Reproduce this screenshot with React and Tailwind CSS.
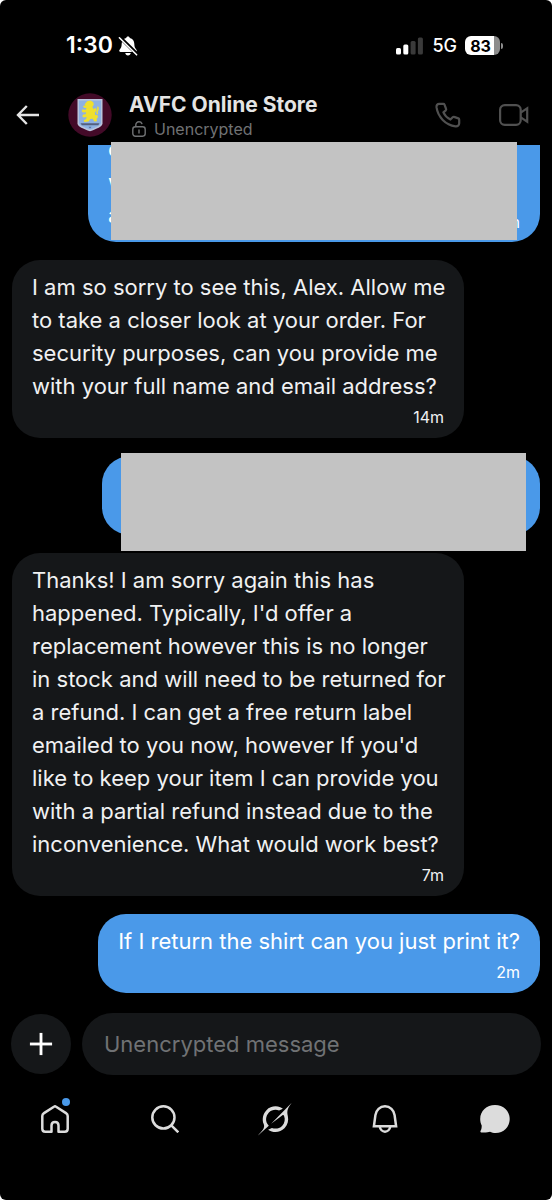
import { Plus } from "lucide-react";

function MutedBell() {
  return (
    <svg viewBox="0 0 20 20" className="size-5" aria-hidden="true">
      <path
        d="M10 .6c1 0 1.700.6 1.800 1.500 2.900.7 4.400 2.900 4.500 5.700.1 2.800.5 3.900 1.600 5.200.6.7.9 1.100.9 1.700 0 .8-.5 1.200-1.300 1.200H2.500c-.8 0-1.300-.4-1.300-1.200 0-.6.3-1 .9-1.700 1.100-1.300 1.500-2.400 1.600-5.200.1-2.800 1.600-5 4.500-5.700C8.300 1.200 9 .6 10 .6zM7.300 16.900h5.400c-.1 1.500-1.200 2.500-2.700 2.500s-2.600-1-2.700-2.500z"
        fill="#fff"
      />
      <path d="M1.600 1L19.400 18.400" stroke="#000" strokeWidth="3.600" />
      <path d="M1.400 1.800L18.600 18.800" stroke="#fff" strokeWidth="1.600" strokeLinecap="round" />
    </svg>
  );
}

function Signal() {
  return (
    <svg viewBox="0 0 28 18" className="h-[18px] w-7" aria-hidden="true">
      <rect x="0" y="11" width="5" height="6.500" rx="1.500" fill="#fff" />
      <rect x="7.300" y="7.500" width="5" height="10" rx="1.500" fill="#fff" />
      <rect x="14.600" y="4" width="5" height="13.500" rx="1.500" fill="#3a3a3a" />
      <rect x="21.900" y="0.500" width="5" height="17" rx="1.500" fill="#3a3a3a" />
    </svg>
  );
}

function Battery() {
  return (
    <div className="flex items-center gap-px">
      <div className="flex h-[19px] w-[35px] items-center justify-center overflow-hidden rounded-md bg-linear-to-r from-white from-83% to-[#8c8c8c] to-83% pr-1 text-[16px] leading-none font-bold text-black">
        83
      </div>
      <div className="h-1.5 w-0.5 rounded-r-full bg-[#8c8c8c]" />
    </div>
  );
}

function BackArrow() {
  return (
    <svg viewBox="0 0 24 20" className="h-5 w-6" fill="none" stroke="#e4e4e4" strokeWidth="2.400" aria-hidden="true">
      <path d="M10.800 1L2 10l8.800 9M2 10h21" />
    </svg>
  );
}

function Crest() {
  return (
    <svg viewBox="0 0 44 44" className="size-11 shrink-0" role="img" aria-label="AVFC crest">
      <circle cx="22" cy="22" r="21.700" fill="#430a28" />
      <path d="M9.500 6h25v24.500c0 3-6 5.500-12.500 7.800C15.500 36 9.500 33.500 9.500 30.500z" fill="#b9c4dc" />
      <path d="M11 7.500h22V30c0 2.300-5 4.300-11 6.500C16 34.300 11 32.300 11 30z" fill="#8db1e2" />
      <path
        d="M16.500 11.500l2.600-3.300 3.600-.6 2.600 1.600.5 2.600-1.500 2.100 1.500 2.300 1-.9 1.700.3-.3 2.500-1.400 1.300.4 2.500 2 .2 1 2-1.500 1.600.2 2.600-2.600.2-1.600-2.800-2.400.4-1.800 2.500-4 .3-.9-1.500 2.500-1.300.5-2-2.900.5-1.500-1.300.9-1.800 2.600-.3.400-2-3.100.4-1.400-1.300.7-1.700 3.300.1 1-1.700-2.700-.3-1-1.700 2.800-.7z"
        fill="#efdf2e"
      />
      <path d="M29.300 20.500c-1.600-2 1.800-3.400.6-6.300" fill="none" stroke="#efdf2e" strokeWidth="1.500" strokeLinecap="round" />
      <path d="M12.500 30.300l19-.1-1.200 2-16.400.1z" fill="#54607f" />
      <path d="M20.500 33.700h3l-1.500 1.800z" fill="#5b6b94" />
    </svg>
  );
}

function OpenLock() {
  return (
    <svg viewBox="0 0 14 16" className="h-4 w-3.5" fill="none" stroke="#707274" strokeWidth="1.400" strokeLinecap="round" aria-hidden="true">
      <rect x="0.800" y="5.800" width="12.400" height="9.400" rx="2.600" />
      <path d="M3.800 5.600V4c0-1.900 1.300-3.200 3.200-3.200 1.300 0 2.400.7 2.900 1.800M7 9v3" />
    </svg>
  );
}

function PhoneIcon() {
  return (
    <svg viewBox="0 0 26 26" className="size-[26px]" fill="none" stroke="#505050" strokeWidth="2.200" strokeLinejoin="round" aria-hidden="true">
      <path d="M4.200 1.800h4.200c.5 0 .9.300 1.100.8l1.600 4.400c.2.500 0 1-.3 1.300L8.400 10.400c1.300 3 3.800 5.700 7 7.200l2.300-2.400c.4-.4.900-.5 1.400-.3l4.200 1.500c.6.200.9.700.9 1.300v3.500c0 2.100-1.600 3.400-3.700 3.100C10.500 23 2.800 14.900 1.500 5.200c-.2-1.900.9-3.400 2.700-3.400z" />
    </svg>
  );
}

function VideoIcon() {
  return (
    <svg viewBox="0 0 30 22" className="h-[22px] w-[30px]" fill="none" stroke="#505050" strokeWidth="2.200" aria-hidden="true">
      <rect x="1.100" y="1.100" width="20.600" height="19.800" rx="4.600" />
      <path d="M21.700 8.600l6.500-4.300v13.400l-6.500-4.300" />
    </svg>
  );
}

function HomeIcon() {
  return (
    <svg viewBox="0 0 28 28" className="size-7" fill="none" stroke="#dcdcdc" strokeWidth="2.500" strokeLinejoin="round" aria-hidden="true">
      <path d="M12.900 1.700L3 8.100C1.900 8.800 1.300 9.800 1.300 11v12.700c0 1.800 1.200 3 3 3h6.200v-6.200c0-2.200 1.400-3.600 3.500-3.600s3.500 1.400 3.500 3.600v6.200h6.200c1.800 0 3-1.200 3-3V11c0-1.200-.6-2.200-1.700-2.900l-9.900-6.400c-.7-.5-1.500-.5-2.200 0z" />
    </svg>
  );
}

function SearchIcon() {
  return (
    <svg viewBox="0 0 28 28" className="size-7" fill="none" stroke="#dcdcdc" strokeWidth="2.500" aria-hidden="true">
      <circle cx="12.400" cy="12.400" r="11.100" />
      <path d="M20.300 20.300l7 7" />
    </svg>
  );
}

function GrokIcon() {
  return (
    <svg viewBox="0 0 33 32" className="size-[34px]" fill="#dcdcdc" aria-hidden="true">
      <path d="M12.745 20.540l10.970-8.190c.539-.400 1.307-.244 1.564.380 1.349 3.288.746 7.241-1.938 9.955-2.683 2.714-6.417 3.310-9.830 1.954l-3.728 1.745c5.347 3.697 11.840 2.782 15.898-1.324 3.219-3.255 4.216-7.692 3.284-11.693l.008.009c-1.351-5.878.332-8.227 3.782-13.031L33 0l-4.540 4.590v-.014L12.743 20.544m-2.263 1.987c-3.837-3.707-3.175-9.446.100-12.755 2.420-2.449 6.388-3.448 9.852-1.979l3.720-1.737c-.670-.490-1.530-1.017-2.515-1.387-4.455-1.854-9.789-.931-13.410 2.728-3.483 3.523-4.579 8.940-2.697 13.561 1.405 3.454-.899 5.898-3.220 8.364C1.490 30.200.666 31.074 0 32l10.478-9.466" />
    </svg>
  );
}

function BellIcon() {
  return (
    <svg viewBox="0 0 26 28" className="h-7 w-[26px]" fill="none" stroke="#dcdcdc" strokeWidth="2.500" aria-hidden="true">
      <path d="M1.900 21.300L3.400 10.200C4 5 8 1.300 13 1.300S22 5 22.600 10.200l1.500 11.100z" />
      <path d="M7.800 21.600c.4 2.900 2.500 5.100 5.200 5.100s4.800-2.200 5.200-5.100" />
    </svg>
  );
}

function ChatIcon() {
  return (
    <svg viewBox="0 0 30 28" className="h-7 w-[30px]" fill="#dcdcdc" aria-hidden="true">
      <path d="M15 0c8.400 0 14.700 6 14.700 13.900S23.600 28 15.600 28c-2 0-3.900-.5-5.600-1.300-1.500.5-4.600 1-8.700.7-.9-.1-1.200-.9-.7-1.600.8-1.300 1.200-3.300 1.100-5.400C.7 18.500.2 16.300.2 13.900.2 6 6.600 0 15 0z" />
    </svg>
  );
}

const navItems = [
  { label: "Home", Icon: HomeIcon, dot: true },
  { label: "Search", Icon: SearchIcon },
  { label: "Grok", Icon: GrokIcon },
  { label: "Notifications", Icon: BellIcon },
  { label: "Messages", Icon: ChatIcon },
];

function Received({ time, children }) {
  return (
    <li className="mr-[76px] rounded-[28px] bg-[#151719] pt-[11px] pr-4 pb-[7px] pl-5">
      <p>{children}</p>
      <time className="block pr-1 text-right text-[16px] leading-7">{time}</time>
    </li>
  );
}

export default function App() {
  return (
    <div className="bg-white">
      <div className="flex min-h-screen flex-col rounded-md bg-black font-['Inter',sans-serif] text-[#f0f1f2]">
        <div className="flex h-[91px] items-center justify-between pr-[49px] pl-[66px] text-white">
          <div className="flex items-center gap-[5px]">
            <span className="text-[23px] leading-none font-semibold">1:30</span>
            <MutedBell />
          </div>
          <div className="flex items-center gap-2">
            <Signal />
            <span className="text-[18px] leading-none font-medium">5G</span>
            <Battery />
          </div>
        </div>

        <header className="flex items-center pr-[23px] pb-1.5 pl-4">
          <button type="button" aria-label="Back">
            <BackArrow />
          </button>
          <div className="ml-7">
            <Crest />
          </div>
          <div className="ml-[17px] grow">
            <h1 className="text-[21px] leading-7 font-bold text-[#e4e4e4]">AVFC Online Store</h1>
            <p className="flex items-center gap-2 pl-[3px] text-[16px] leading-5 text-[#707274]">
              <OpenLock />
              Unencrypted
            </p>
          </div>
          <button type="button" aria-label="Call">
            <PhoneIcon />
          </button>
          <button type="button" aria-label="Video call" className="ml-[38px]">
            <VideoIcon />
          </button>
        </header>

        <ul className="flex flex-col gap-[18px] px-3 text-[22px] leading-[33px]">
          <li className="relative ml-[76px]">
            <div className="flex h-[97px] items-end overflow-hidden rounded-b-[28px] bg-[#4a99e9] px-5 text-white">
              <p className="grow pb-2.5">
                c<br />w<br />a
              </p>
              <time className="pb-1.5 text-[16px] leading-7">18m</time>
            </div>
            <div className="absolute -top-[3px] right-[23px] bottom-0.5 left-[23px] bg-[#c3c3c3]" />
          </li>

          <Received time="14m">
            I am so sorry to see this, Alex. Allow me to take a closer look at your order. For security purposes, can
            you provide me with your full name and email address?
          </Received>

          <li className="relative ml-[90px] h-[79px] rounded-[28px] bg-[#4a99e9]">
            <div className="absolute -top-[3px] right-[14px] -bottom-4 left-[19px] bg-[#c3c3c3]" />
          </li>

          <Received time="7m">
            Thanks! I am sorry again this has happened. Typically, I'd offer a replacement however this is no longer in
            stock and will need to be returned for a refund. I can get a free return label emailed to you now, however
            If you'd like to keep your item I can provide you with a partial refund instead due to the inconvenience.
            What would work best?
          </Received>

          <li className="self-end rounded-[28px] bg-[#4a99e9] px-5 pt-[11px] pb-[7px] text-white">
            <p>If I return the shirt can you just print it?</p>
            <time className="block text-right text-[16px] leading-7">2m</time>
          </li>
        </ul>

        <form className="mt-5 flex items-center gap-[11px] px-[11px]" onSubmit={(e) => e.preventDefault()}>
          <button
            type="button"
            aria-label="Add attachment"
            className="flex size-[60px] shrink-0 items-center justify-center rounded-full bg-[#151719] text-white"
          >
            <Plus size={38} strokeWidth={1.8} strokeLinecap="butt" />
          </button>
          <input
            type="text"
            aria-label="Message"
            placeholder="Unencrypted message"
            className="h-[62px] min-w-0 grow rounded-full bg-[#151719] px-[22px] text-[22px] outline-none placeholder:text-[#707274]"
          />
        </form>

        <nav className="mt-6 grid grid-cols-5 pr-0.5 pb-14">
          {navItems.map(({ label, Icon, dot }) => (
            <a key={label} href="#" aria-label={label} className="flex h-10 items-center justify-center">
              <span className="relative">
                <Icon />
                {dot && <span className="absolute -top-[7px] -right-px size-2 rounded-full bg-[#4a99e9]" />}
              </span>
            </a>
          ))}
        </nav>
      </div>
    </div>
  );
}
